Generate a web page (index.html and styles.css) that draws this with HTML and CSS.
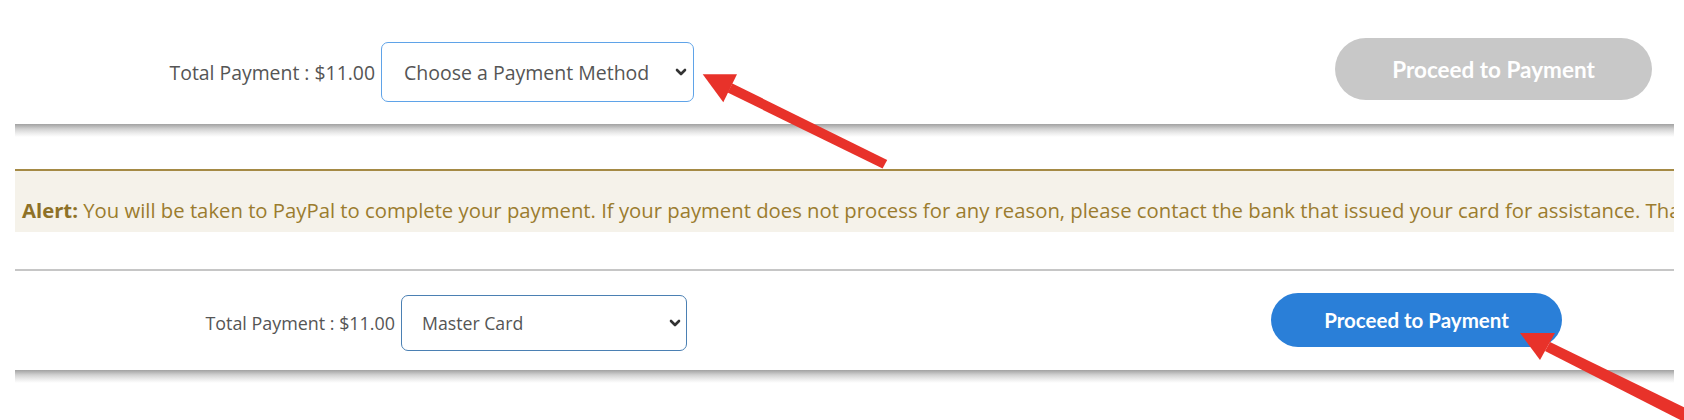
FILE: index.html
```html
<!DOCTYPE html>
<html lang="en">
<head>
<meta charset="utf-8">
<title>Payment</title>
<link rel="stylesheet" href="styles.css">
</head>
<body>
<div class="page">
  <section class="card card-top">
    <div class="pay-group group-top">
      <label class="total total-top">Total Payment : $11.00</label>
      <span class="select-wrap">
        <select class="method method-top"><option>Choose a Payment Method</option></select>
        <svg class="chev chev-top" width="12" height="8" viewBox="0 0 12 8"><path d="M2 2 L6 6 L10 2" fill="none" stroke="#333" stroke-width="2.6" stroke-linecap="round" stroke-linejoin="round"/></svg>
      </span>
    </div>
    <button class="proceed proceed-disabled" disabled>Proceed to Payment</button>
  </section>
  <div class="shadow"></div>

  <div class="alert"><p class="alert-text"><b>Alert:</b> You will be taken to PayPal to complete your payment. If your payment does not process for any reason, please contact the bank that issued your card for assistance. Thank you.</p></div>

  <div class="rule"></div>

  <section class="card card-bottom">
    <div class="pay-group group-bottom">
      <label class="total total-bottom">Total Payment : $11.00</label>
      <span class="select-wrap">
        <select class="method method-bottom"><option>Master Card</option></select>
        <svg class="chev chev-bottom" width="12" height="8" viewBox="0 0 12 8"><path d="M2 2 L6 6 L10 2" fill="none" stroke="#333" stroke-width="2.6" stroke-linecap="round" stroke-linejoin="round"/></svg>
      </span>
    </div>
    <button class="proceed proceed-active">Proceed to Payment</button>
  </section>
  <div class="shadow"></div>

  <svg class="annot" width="1684" height="420" viewBox="0 0 1684 420">
    <g fill="#e8322a" stroke="none">
      <polygon points="702.7,74.3 737,74.3 723.3,102.3"/>
      <polygon points="727.6,92.5 732.4,83.5 887.2,160 882.6,168.6"/>
      <polygon points="1520,333 1555,333 1540,360"/>
      <polygon points="1545,351 1550,342 1710,420 1700,430"/>
    </g>
  </svg>
</div>
</body>
</html>
```

FILE: styles.css
```css
* { box-sizing: border-box; }

html, body {
  margin: 0;
  padding: 0;
  background: #ffffff;
}

body {
  width: 1684px;
  height: 420px;
  overflow: hidden;
  font-family: "Open Sans", "Liberation Sans", sans-serif;
}

.page {
  position: relative;
  width: 1684px;
  height: 420px;
  padding-left: 15px;
}

.card {
  width: 1659px;
  background: #ffffff;
  display: flex;
  align-items: flex-start;
}

.card-top {
  height: 124px;
}

.card-bottom {
  height: 99px;
}

.pay-group {
  display: flex;
  align-items: center;
}

.group-top { margin-top: 42px; }
.group-bottom { margin-top: 24px; }

.total {
  text-align: right;
  color: #555555;
  white-space: nowrap;
}

.total-top {
  width: 360px;
  font-size: 19.4px;
  margin-right: 6px;
}

.total-bottom {
  width: 380px;
  font-size: 17.9px;
  margin-right: 6px;
}

.select-wrap {
  position: relative;
  display: block;
}

.method {
  appearance: none;
  -webkit-appearance: none;
  background: #ffffff;
  font-family: "Open Sans", "Liberation Sans", sans-serif;
  color: #555555;
  outline: none;
  display: block;
  margin: 0;
}

.method-top {
  width: 313px;
  height: 60px;
  border: 1.5px solid #5fa3e8;
  border-radius: 7px;
  font-size: 19.5px;
  padding: 0 0 0 22px;
}

.method-bottom {
  width: 286px;
  height: 56px;
  border: 1.5px solid #4b80b3;
  border-radius: 7px;
  font-size: 17.7px;
  padding: 0 0 0 20px;
}

.chev {
  position: absolute;
  top: 50%;
  margin-top: -4px;
  pointer-events: none;
}

.chev-top { right: 7px; }
.chev-bottom { right: 6px; }

.proceed {
  margin-left: auto;
  border: none;
  border-radius: 999px;
  color: #ffffff;
  font-family: Lato, "Open Sans", sans-serif;
  font-weight: 700;
  cursor: pointer;
  padding: 0;
}

.proceed-disabled {
  width: 317px;
  height: 62px;
  margin-top: 38px;
  margin-right: 22px;
  background: #c8c8c8;
  font-size: 22.5px;
  cursor: default;
}

.proceed-active {
  width: 291px;
  height: 54px;
  margin-top: 22px;
  margin-right: 112px;
  background: #2a7fd8;
  font-size: 20.5px;
}

.shadow {
  width: 1659px;
  height: 13px;
  background: linear-gradient(to bottom, #a2a2a2 0px, #b5b5b5 2px, #d2d2d2 5px, #ebebeb 9px, #fafafa 12px, #ffffff 13px);
}

.alert {
  margin-top: 32px;
  width: 1659px;
  height: 63px;
  border-top: 2px solid #a58a45;
  background: #f5f2ea;
  padding-top: 18px;
  padding-left: 7px;
  overflow: hidden;
}

.alert-text {
  margin: 0;
  color: #9b7c2e;
  font-size: 20.3px;
  line-height: 43px;
  white-space: nowrap;
}

.alert-text b {
  font-weight: 700;
  color: #8e7127;
}

.rule {
  margin-top: 37px;
  width: 1659px;
  height: 2px;
  background: #c6c6c6;
}

.annot {
  position: absolute;
  left: 0;
  top: 0;
  pointer-events: none;
}
```
